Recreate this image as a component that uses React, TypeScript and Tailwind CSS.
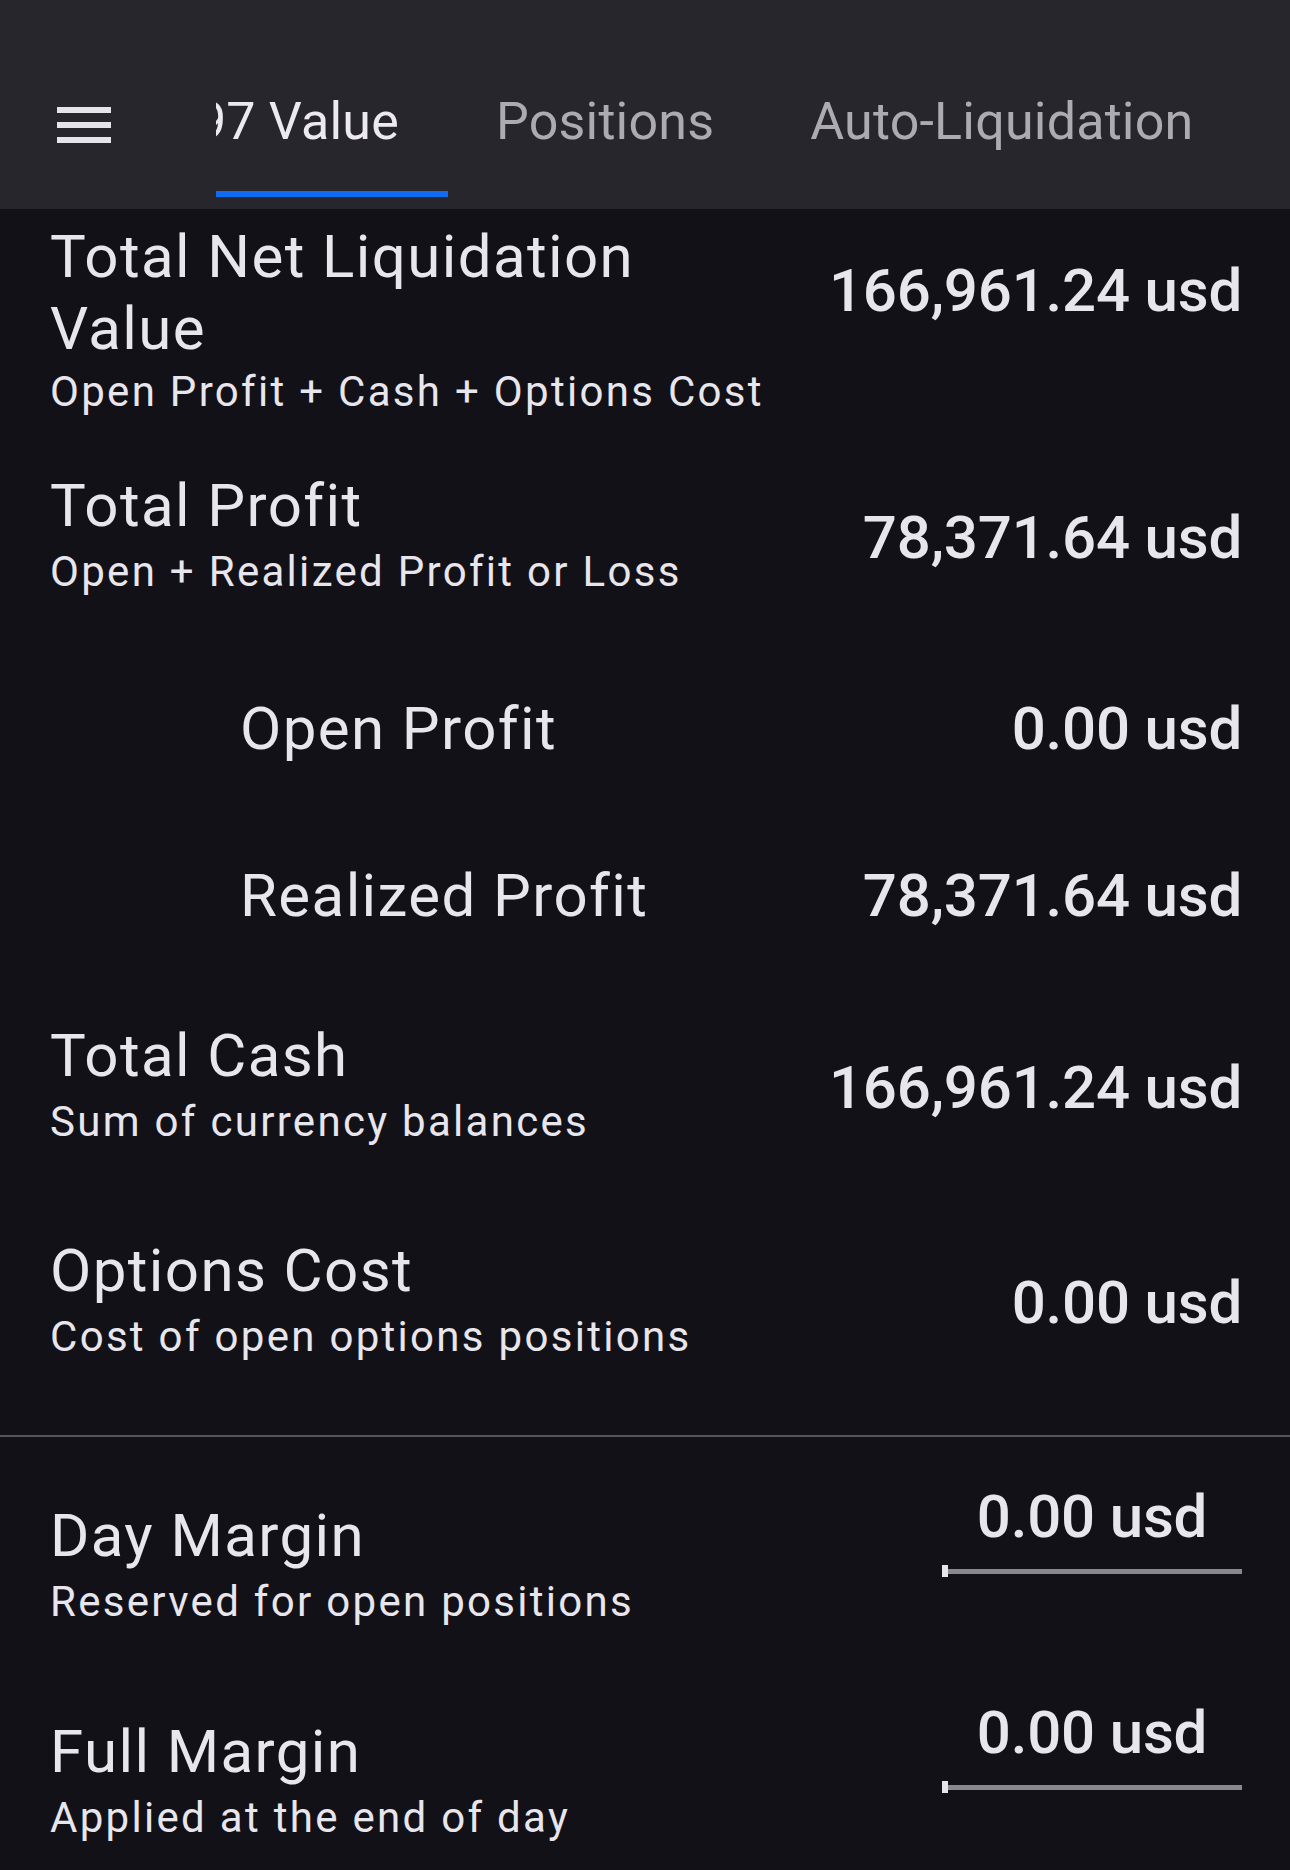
import React from "react";

type Item = {
  title: string;
  sub?: string;
  value: string;
  indent?: boolean;
  gap: string;
};

const Tabs = () => {
  return (
    <div className="flex h-[209px] w-full bg-[#27262c]">
      <div className="ml-[57px] mt-[107px] flex flex-col gap-[9px] shrink-0">
        <div className="h-[6px] w-[54px] bg-[#e6e4eb]" />
        <div className="h-[6px] w-[54px] bg-[#e6e4eb]" />
        <div className="h-[6px] w-[54px] bg-[#e6e4eb]" />
      </div>
      <div className="ml-[105px] flex h-full min-w-0 flex-1 overflow-hidden text-[52px] leading-[64px] tracking-[0.2px]">
        <div className="flex h-full w-[232px] shrink-0 flex-col">
          <div className="flex justify-end overflow-hidden pr-[49px] pt-[90px] text-[#eceaf0]">
            <span className="shrink-0 whitespace-nowrap">1097 Value</span>
          </div>
          <div className="mb-[12px] mt-auto h-[6px] w-full bg-[#0f6cf2]" />
        </div>
        <div className="flex h-full shrink-0 flex-col px-[48px] pt-[90px] text-[#adabb2]">
          <span className="whitespace-nowrap">Positions</span>
        </div>
        <div className="flex h-full shrink-0 flex-col px-[48px] pt-[90px] text-[#adabb2]">
          <span className="whitespace-nowrap">Auto-Liquidation</span>
        </div>
      </div>
    </div>
  );
};

const Row = ({ item }: { item: Item }) => {
  return (
    <div className={`flex items-center justify-between ${item.gap}`}>
      <div className={`max-w-[730px] ${item.indent ? "pl-[190px]" : ""}`}>
        <div className="text-[60px] leading-[72px] tracking-[1.4px]">{item.title}</div>
        {item.sub && (
          <div className="mt-[5px] whitespace-nowrap text-[42px] leading-[50px] tracking-[2.3px]">
            {item.sub}
          </div>
        )}
      </div>
      <div className={`whitespace-nowrap text-[60px] font-medium leading-[72px] tracking-[-0.2px] ${item.sub ? "pt-[8px]" : ""}`}>
        {item.value}
      </div>
    </div>
  );
};

const MarginRow = ({ title, sub, value, gap }: { title: string; sub: string; value: string; gap: string }) => {
  return (
    <div className={`flex items-start justify-between ${gap}`}>
      <div className="pt-[19px]">
        <div className="text-[60px] leading-[72px] tracking-[1.4px]">{title}</div>
        <div className="mt-[5px] whitespace-nowrap text-[42px] leading-[50px] tracking-[2.3px]">{sub}</div>
      </div>
      <div className="w-[300px]">
        <div className="text-center text-[60px] font-medium leading-[72px] tracking-[-0.2px]">{value}</div>
        <div className="mt-[12px] flex h-[12px] items-center">
          <div className="h-[12px] w-[6px] bg-[#e6e4eb]" />
          <div className="h-[5px] flex-1 bg-[#89888d]" />
        </div>
      </div>
    </div>
  );
};

const items: Item[] = [
  { title: "Total Profit", sub: "Open + Realized Profit or Loss", value: "78,371.64 usd", gap: "mt-[53px]" },
  { title: "Open Profit", value: "0.00 usd", indent: true, gap: "mt-[96px]" },
  { title: "Realized Profit", value: "78,371.64 usd", indent: true, gap: "mt-[95px]" },
  { title: "Total Cash", sub: "Sum of currency balances", value: "166,961.24 usd", gap: "mt-[88px]" },
  { title: "Options Cost", sub: "Cost of open options positions", value: "0.00 usd", gap: "mt-[88px]" },
];

export default function App() {
  return (
    <div className="min-h-screen w-full overflow-hidden bg-[#131118] font-['Roboto',sans-serif] text-[#e8e6ed]">
      <Tabs />
      <div className="pl-[50px] pr-[48px] pt-[12px]">
        <div className="flex items-start justify-between">
          <div className="w-[730px]">
            <div className="text-[60px] leading-[72px] tracking-[1.4px]">Total Net Liquidation Value</div>
            <div className="mt-[2px] whitespace-nowrap text-[42px] leading-[50px] tracking-[2.3px]">
              Open Profit + Cash + Options Cost
            </div>
          </div>
          <div className="mt-[34px] whitespace-nowrap text-[60px] font-medium leading-[72px] tracking-[-0.2px]">
            166,961.24 usd
          </div>
        </div>
        {items.map((it) => (
          <Row key={it.title} item={it} />
        ))}
      </div>
      <div className="mt-[73px] h-[2px] w-full bg-[#56545b]" />
      <div className="pl-[50px] pr-[48px]">
        <MarginRow title="Day Margin" sub="Reserved for open positions" value="0.00 usd" gap="mt-[44px]" />
        <MarginRow title="Full Margin" sub="Applied at the end of day" value="0.00 usd" gap="mt-[70px]" />
      </div>
    </div>
  );
}
